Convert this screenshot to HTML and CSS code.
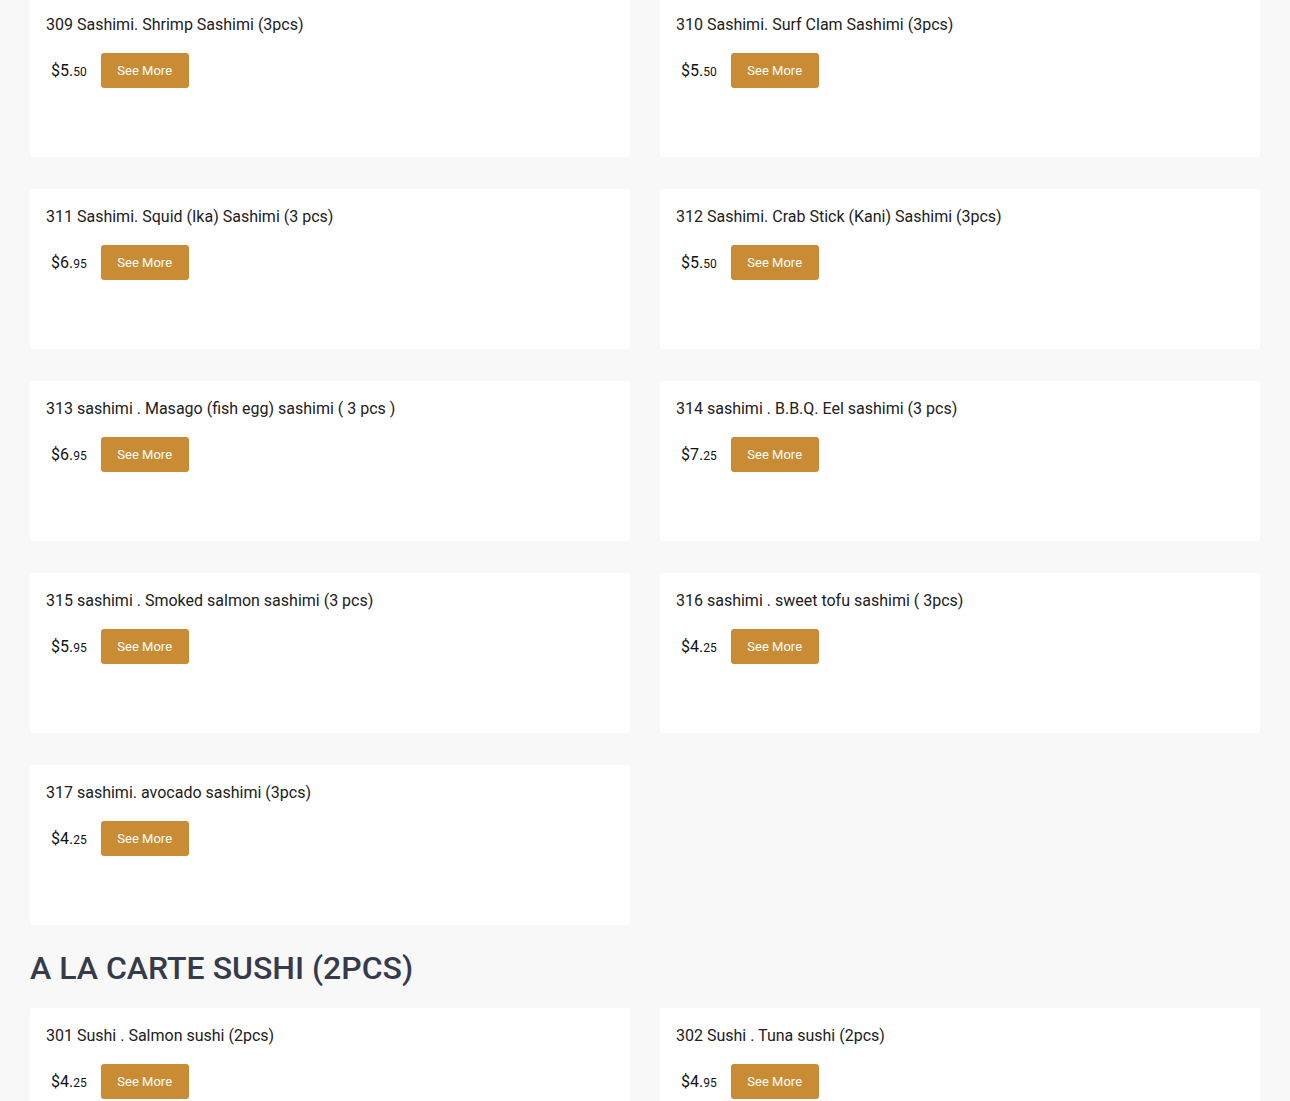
FILE: index.html
```html
<!DOCTYPE html>
<html>
<head>
<meta charset="utf-8">
<link rel="stylesheet" href="styles.css">
</head>
<body>
<main class="page">
  <section class="grid first">
    <div class="card"><div class="title">309 Sashimi. Shrimp Sashimi (3pcs)</div><div class="row"><span class="price">$5.<small>50</small></span><button class="btn">See More</button></div></div>
    <div class="card"><div class="title">310 Sashimi. Surf Clam Sashimi (3pcs)</div><div class="row"><span class="price">$5.<small>50</small></span><button class="btn">See More</button></div></div>
    <div class="card"><div class="title">311 Sashimi. Squid (Ika) Sashimi (3 pcs)</div><div class="row"><span class="price">$6.<small>95</small></span><button class="btn">See More</button></div></div>
    <div class="card"><div class="title">312 Sashimi. Crab Stick (Kani) Sashimi (3pcs)</div><div class="row"><span class="price">$5.<small>50</small></span><button class="btn">See More</button></div></div>
    <div class="card"><div class="title">313 sashimi . Masago (fish egg) sashimi ( 3 pcs )</div><div class="row"><span class="price">$6.<small>95</small></span><button class="btn">See More</button></div></div>
    <div class="card"><div class="title">314 sashimi . B.B.Q. Eel sashimi (3 pcs)</div><div class="row"><span class="price">$7.<small>25</small></span><button class="btn">See More</button></div></div>
    <div class="card"><div class="title">315 sashimi . Smoked salmon sashimi (3 pcs)</div><div class="row"><span class="price">$5.<small>95</small></span><button class="btn">See More</button></div></div>
    <div class="card"><div class="title">316 sashimi . sweet tofu sashimi ( 3pcs)</div><div class="row"><span class="price">$4.<small>25</small></span><button class="btn">See More</button></div></div>
    <div class="card"><div class="title">317 sashimi. avocado sashimi (3pcs)</div><div class="row"><span class="price">$4.<small>25</small></span><button class="btn">See More</button></div></div>
  </section>
  <h2 class="heading">A LA CARTE SUSHI (2PCS)</h2>
  <section class="grid">
    <div class="card"><div class="title">301 Sushi . Salmon sushi (2pcs)</div><div class="row"><span class="price">$4.<small>25</small></span><button class="btn">See More</button></div></div>
    <div class="card"><div class="title">302 Sushi . Tuna sushi (2pcs)</div><div class="row"><span class="price">$4.<small>95</small></span><button class="btn">See More</button></div></div>
  </section>
</main>
</body>
</html>
```

FILE: styles.css
```css
html, body {
  margin: 0;
  padding: 0;
  background: #f8f8f8;
  font-family: Roboto, "Liberation Sans", Arial, sans-serif;
}
.page {
  padding: 0 30px;
  margin-top: -3px;
}
.grid {
  display: grid;
  grid-template-columns: 600px 600px;
  column-gap: 30px;
  row-gap: 32px;
}
.card {
  background: #ffffff;
  height: 160px;
  box-sizing: border-box;
  padding: 17px 16px 16px;
  border-radius: 3px;
}
.title {
  font-size: 16px;
  line-height: 22px;
  color: #212121;
}
.row {
  display: flex;
  align-items: center;
  gap: 14px;
  margin-top: 17px;
}
.price {
  margin-left: 5px;
  font-size: 16px;
  color: #111;
}
.price small {
  font-size: 12px;
}
.btn {
  width: 88px;
  height: 35px;
  border: none;
  border-radius: 3px;
  background: #c98c35;
  color: #fff;
  font-family: Roboto, "Liberation Sans", Arial, sans-serif;
  font-size: 13px;
  padding: 0;
}
.heading {
  margin: 23px 0 20px;
  font-size: 32px;
  line-height: 40px;
  font-weight: 500;
  color: #363b4c;
}
```
